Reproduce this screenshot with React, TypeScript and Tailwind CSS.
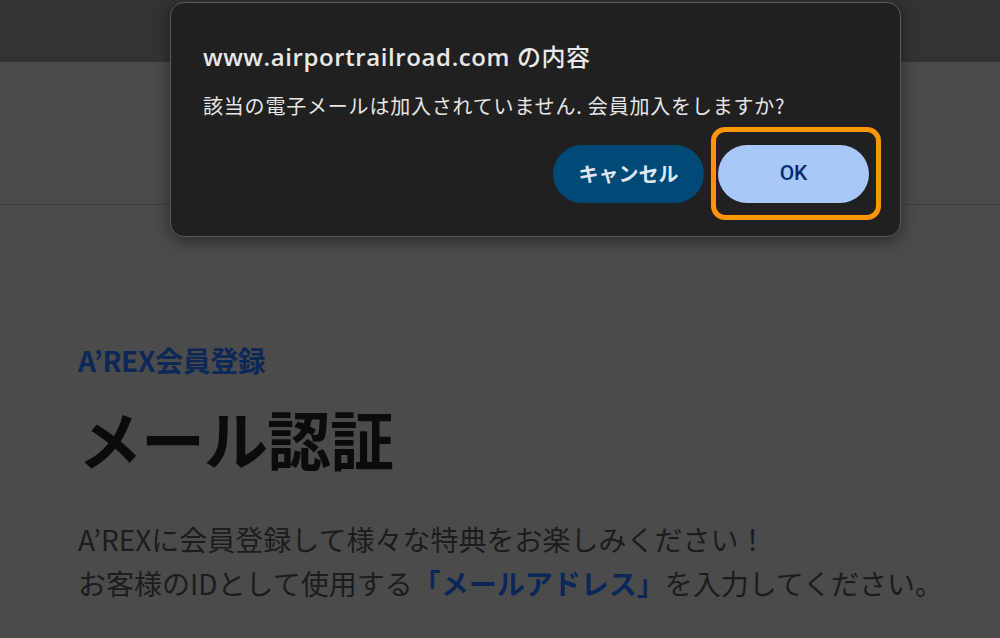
export default function App() {
  return (
    <div
      className="relative w-[1000px] h-[638px] overflow-hidden bg-[#4b4b4b]"
      style={{ fontFamily: '"Noto Sans CJK JP", "Noto Sans", sans-serif' }}
    >
      {/* page behind the alert */}
      <div className="h-[62px] bg-[#333333]" />
      <div className="h-[143px] bg-[#4a4a4a] border-b border-[#3f3f3f]" />

      <div className="pl-[78px] pt-[136px]">
        <div className="text-[28px] leading-[38px] font-bold text-[#0b2857] tracking-[-0.4px]">A’REX会員登録</div>
        <h1 className="mt-[20px] text-[64px] leading-[76px] font-bold text-[#0b0b0b] tracking-[-1px]">メール認証</h1>
        <div className="mt-[42px] text-[28px] leading-[44px] text-[#1c1c1c]">
          <p>A’REXに会員登録して様々な特典をお楽しみください！</p>
          <p>
            お客様のIDとして使用する
            <span className="font-bold text-[#0a2757]">「メールアドレス」</span>
            を入力してください。
          </p>
        </div>
      </div>

      {/* alert dialog */}
      <div className="absolute left-[170px] top-[2px] w-[731px] h-[235px] rounded-[14px] bg-[#202020] border border-[#5a5a5a] shadow-[0_4px_16px_rgba(0,0,0,0.45)] pl-[32px] pr-[31px]">
        <div
          className="mt-[39px] text-[24px] leading-[30px] font-semibold text-[#e8e8e8] tracking-[0.6px]"
          style={{ fontFamily: '"Open Sans", "Noto Sans CJK JP", sans-serif' }}
        >
          www.airportrailroad.com <span className="font-medium">の内容</span>
        </div>
        <div className="mt-[20px] text-[20px] leading-[28px] text-[#e6e6e6] tracking-[0.8px]">
          該当の電子メールは加入されていません. 会員加入をしますか?
        </div>
        <div className="mt-[25px] flex justify-end items-center gap-[14px]">
          <button className="w-[151px] h-[58px] rounded-full bg-[#004a77] text-[#dfe8f2] text-[20px] font-bold">
            キャンセル
          </button>
          <div className="relative">
            <button
              className="w-[151px] h-[58px] rounded-full bg-[#a8c8fa] text-[#062e6f] text-[21px] font-medium"
              style={{ fontFamily: 'Roboto, "Noto Sans CJK JP", sans-serif' }}
            >
              OK
            </button>
            {/* keyboard focus ring */}
            <span className="absolute -left-[7px] -right-[12px] -top-[18px] -bottom-[17px] rounded-[14px] border-[5px] border-[#ff9500] pointer-events-none" />
          </div>
        </div>
      </div>
    </div>
  );
}
